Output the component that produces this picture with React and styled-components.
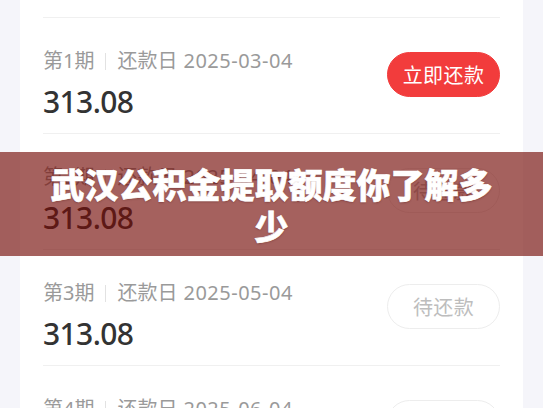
import React from "react";
import styled, { createGlobalStyle } from "styled-components";

const GlobalStyle = createGlobalStyle`
  html, body {
    margin: 0;
    padding: 0;
    background: #f5f5fa;
  }
  body {
    font-family: "Noto Sans", "Noto Sans CJK SC", sans-serif;
  }
`;

const Page = styled.div`
  position: relative;
  height: 408px;
  overflow: hidden;
  background: #f5f5fa;
`;

const Card = styled.div`
  margin: -38px 20px 0;
  padding: 0 23px;
  background: #fff;
`;

const SummaryRow = styled.div`
  padding: 20px 0 15px;
  border-bottom: 1px solid #f0f0f0;
`;

const SummaryText = styled.div`
  font-size: 14px;
  line-height: 20px;
  color: #d0d0d0;
`;

const Row = styled.div`
  display: flex;
  justify-content: space-between;
  align-items: flex-start;
  padding: 29px 0 13px;
  border-bottom: 1px solid #f0f0f0;
`;

const Info = styled.div`
  display: flex;
  flex-direction: column;
`;

const Meta = styled.div`
  display: flex;
  align-items: center;
  font-size: 20px;
  line-height: 28px;
  color: #9a9a9a;
`;

const Sep = styled.span`
  width: 1px;
  height: 17px;
  margin: 0 11px;
  background: #e2e2e2;
`;

const DueDate = styled.span`
  margin-left: 6px;
  letter-spacing: 0.5px;
`;

const Amount = styled.div`
  margin-top: 9px;
  font-size: 30px;
  line-height: 36px;
  font-weight: 500;
  letter-spacing: -0.6px;
  color: #333;
`;

const PayButton = styled.button`
  margin-top: 5px;
  width: 113px;
  height: 45px;
  border-radius: 23px;
  font-family: "Noto Sans CJK SC", sans-serif;
  font-size: 20px;
  letter-spacing: 0.4px;
  padding: 0;
  cursor: pointer;
  background: ${(p) => (p.primary ? "#f23c3c" : "#fff")};
  color: ${(p) => (p.primary ? "#fff" : "#bdbdbd")};
  border: 1px solid ${(p) => (p.primary ? "#f23c3c" : "#ededed")};
`;

const Banner = styled.div`
  position: absolute;
  top: 152px;
  left: 0;
  right: 0;
  height: 104px;
  box-sizing: border-box;
  padding: 11px 40px 9px;
  background: rgba(117, 13, 7, 0.65);
  display: flex;
  justify-content: center;
`;

const BannerTitle = styled.h1`
  margin: 0;
  font-family: "Noto Sans CJK SC", sans-serif;
  font-size: 34px;
  line-height: 42px;
  font-weight: 900;
  color: #fff;
  text-align: center;
  -webkit-text-stroke: 0.6px #fff;
  text-shadow: 0 1px 2px rgba(60, 0, 0, 0.35);
`;

const plan = [
  { period: 1, date: "2025-03-04", amount: "313.08", due: true },
  { period: 2, date: "2025-04-04", amount: "313.08" },
  { period: 3, date: "2025-05-04", amount: "313.08" },
  { period: 4, date: "2025-06-04", amount: "313.08" },
];

export default function App() {
  return (
    <Page>
      <GlobalStyle />
      <Card>
        <SummaryRow>
          <SummaryText>剩余应还 3756.96</SummaryText>
        </SummaryRow>
        {plan.map((item) => (
          <Row key={item.period}>
            <Info>
              <Meta>
                <span>第{item.period}期</span>
                <Sep />
                <span>还款日</span>
                <DueDate>{item.date}</DueDate>
              </Meta>
              <Amount>{item.amount}</Amount>
            </Info>
            <PayButton primary={item.due}>
              {item.due ? "立即还款" : "待还款"}
            </PayButton>
          </Row>
        ))}
      </Card>
      <Banner>
        <BannerTitle>武汉公积金提取额度你了解多少</BannerTitle>
      </Banner>
    </Page>
  );
}
